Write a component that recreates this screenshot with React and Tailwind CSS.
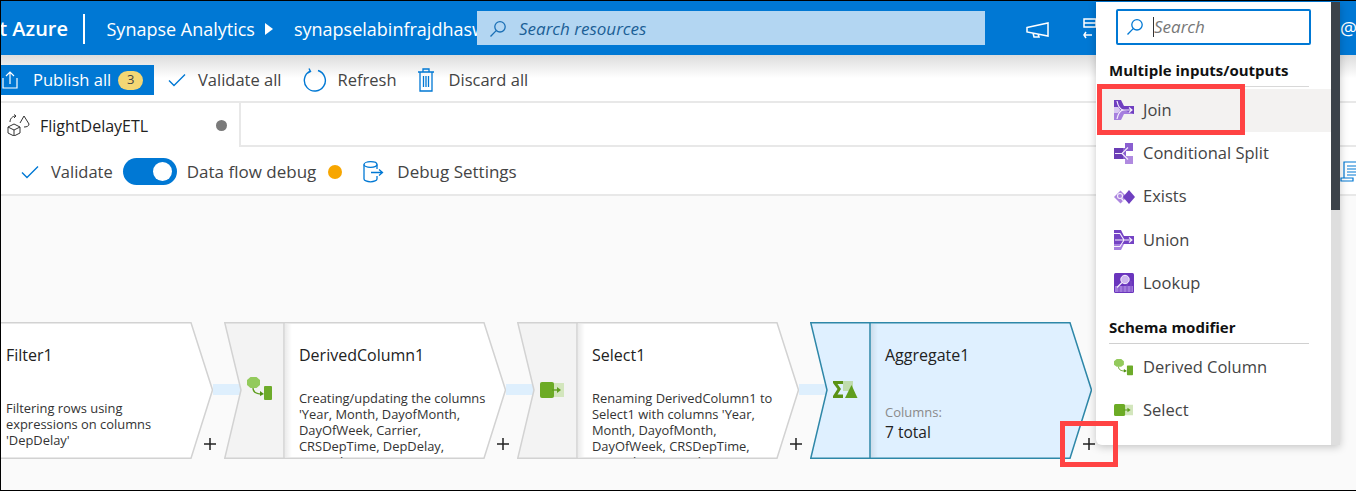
import React from "react";

const Check = ({ className }) => (
  <svg width="18" height="14" viewBox="0 0 18 14" fill="none" stroke="#0078d4" strokeWidth="1.4" className={className}>
    <path d="M1 7.5 L6 12.5 L17 1.5" />
  </svg>
);

const SearchGlass = ({ color = "#0078d4" }) => (
  <svg width="18" height="18" viewBox="0 0 18 18" fill="none" stroke={color} strokeWidth="1.3" className="flex-none">
    <circle cx="11" cy="6.8" r="5.2" />
    <path d="M7.2 10.6 L1.5 16.5" />
  </svg>
);

// purple transform icons from the menu
const JoinIcon = () => (
  <svg width="20" height="20" viewBox="0 0 20 20" className="flex-none">
    <path d="M0 0h7l3 6h10v8H0v-1h4l2-3-2-3H0z" fill="#6f3fc0" />
    <path d="M0 13h4l2-3h4l10 4h-10l-3 6H0z" fill="#a57ede" />
    <path d="M0 7h4l2 3-2 3H0z" fill="#d9c8f2" />
    <path d="M3 1c1 5 3 9 7 9h8M3 19c1-5 3-9 7-9M15 7.500 18 10l-3 2.500" fill="none" stroke="#f5effc" strokeWidth="1.200" />
  </svg>
);

const SplitIcon = () => (
  <svg width="20" height="21" viewBox="0 0 20 21" className="flex-none">
    <path d="M0 5h9v11H0z" fill="#6a3db5" />
    <path d="M11 0h8v8h-8z" fill="#8a5fd0" />
    <path d="M11 13h8v8h-8z" fill="#b08ae0" />
    <path d="M9 5h3v11H9z" fill="#8a5fd0" />
    <path d="M1 10.500h7l6-6M8 10.500l6 6" fill="none" stroke="#f1e9fb" strokeWidth="1.200" />
  </svg>
);

const ExistsIcon = () => (
  <svg width="21" height="16" viewBox="0 0 21 16" className="flex-none">
    <path d="M0 8l6.500-6.500L13 8l-6.500 6.500z" fill="#ac86df" />
    <path d="M9 8l6-7 6 7-6 7z" fill="#6f3fc0" />
    <circle cx="6" cy="7" r="2.500" fill="#ac86df" stroke="#f5effc" strokeWidth="1.100" />
    <path d="M7.500 9.500 10 12.500" stroke="#f5effc" strokeWidth="1.300" />
  </svg>
);

const UnionIcon = () => (
  <svg width="20" height="20" viewBox="0 0 20 20" className="flex-none">
    <path d="M0 0h7l3 6h10v8H0z" fill="#7443c4" />
    <path d="M0 14h10l-3 6H0z" fill="#a57ede" />
    <path d="M0 3.500h6l4 6.500H1M0 16.500h6l4-6.500h8M15 7.500 18 10l-3 2.500" fill="none" stroke="#f5effc" strokeWidth="1.100" />
  </svg>
);

const LookupIcon = () => (
  <svg width="20" height="20" viewBox="0 0 20 20" className="flex-none">
    <rect width="20" height="20" rx="1.500" fill="#6a35bd" />
    <path d="M1 13h18v6H1z" fill="#a27bdc" />
    <path d="M5 13v6M9 13v6M13 10v9M17 8v11" stroke="#7d4fc4" strokeWidth="1" />
    <circle cx="11" cy="6.500" r="4.200" fill="#cdb6ee" stroke="#f5effc" strokeWidth="1" />
    <path d="M8 9.500 3 14.500" stroke="#f5effc" strokeWidth="1.300" />
  </svg>
);

const DerivedIcon = ({ width = 25, height = 24, className }) => (
  <svg width={width} height={height} viewBox="0 0 25 24" preserveAspectRatio="none" className={className}>
    <path d="M3.500 0h6l3.500 3v5l-3.500 3h-6L0 8V3z" fill="#93ca5c" />
    <path d="M6 11c0 4 3 6 9 6" fill="none" stroke="#5f9e1f" strokeWidth="1.300" />
    <path d="M13 14l4 3-4 2z" fill="#4f8f14" />
    <rect x="17" y="9" width="8" height="14" rx="1" fill="#6dab2a" />
  </svg>
);

const SelectIcon = ({ width = 24, height = 16, className }) => (
  <svg width={width} height={height} viewBox="0 0 24 16" preserveAspectRatio="none" className={className}>
    <rect x="12" y="1" width="12" height="14" fill="#d3e6bd" />
    <rect y="0" width="14" height="16" rx="2" fill="#6cab25" />
    <path d="M12 8h7" stroke="#5f9e1f" strokeWidth="1.400" />
    <path d="M17 5l4 3-4 3z" fill="#5f9e1f" />
  </svg>
);

const AggregateIcon = ({ className }) => (
  <svg width="25" height="17" viewBox="0 0 25 17" className={className}>
    <rect x="10" y="0" width="10" height="10" fill="#bfdcae" />
    <path d="M0 0h10v3H4.500l3.500 5-3.500 5.500H10V17H0v-2l4.500-7L0 2z" fill="#5a9216" />
    <path d="M18.500 4l6 13H12z" fill="#5f9e1f" />
  </svg>
);

const Plus = ({ className }) => (
  <svg width="12" height="12" viewBox="0 0 12 12" stroke="#222" strokeWidth="1.5" className={className}>
    <path d="M6 0v12M0 6h12" />
  </svg>
);

const FlowNode = ({ title, icon, lines, selected, bar, textTop, children }) => {
  const stroke = selected ? "#2e87a8" : "#d2d2d2";
  const bodyFill = selected ? "#dff0ff" : "#ffffff";
  const panelFill = selected ? "#dff0ff" : "#f3f3f3";
  return (
    <div className="relative w-[282px] h-[137px] flex-none">
      {bar && <div className="absolute left-[-11px] top-[62px] w-[30px] h-[11px] bg-[#deeffd]" />}
      <svg width="282" height="137" viewBox="0 0 282 137" className="absolute left-0 top-0">
        <path d="M60 .75H260L281.500 68 260 136.250H60z" fill={bodyFill} />
        <path d="M.75 .75H60V136.250H.75L17 68z" fill={panelFill} />
        <path d="M60 .75H260L281.500 68 260 136.250H.75L17 68 .75 .75zM60 .75V136.250" fill="none" stroke={stroke} strokeWidth="1.500" />
      </svg>
      <div className="absolute left-[61px] top-[2px] w-[7px] h-[133px] bg-gradient-to-r from-[#00000014] to-transparent" />
      <div className="relative flex h-[136px]">
        <div className="w-[60px] flex-none flex justify-center items-start">{icon}</div>
        <div className="w-[212px] pl-[15px] overflow-hidden text-[#333]">
          <div className="mt-[22px] text-[16px] leading-[22px] text-[#222] whitespace-nowrap">{title}</div>
          {lines ? (
            <div className={`text-[12.900px] leading-[16px] whitespace-nowrap ${textTop}`}>
              {lines.map((l) => (
                <div key={l}>{l}</div>
              ))}
            </div>
          ) : (
            children
          )}
        </div>
      </div>
      <Plus className="absolute left-[273px] top-[116px]" />
    </div>
  );
};

const MenuItem = ({ icon, label, active }) => (
  <div className={`h-[43.300px] flex items-center ${active ? "bg-[#f3f2f1]" : ""}`}>
    <div className="w-[46px] pl-[17px] flex-none flex">{icon}</div>
    <span className="text-[16.500px] text-[#444]">{label}</span>
  </div>
);

const AddMenu = () => (
  <div className="absolute left-[1095px] top-[1px] w-[244px] h-[443px] bg-white rounded-bl-[6px] shadow-[0_2px_8px_rgba(0,0,0,0.22)] flex">
    <div className="w-[235px] flex-none">
      <div className="mt-[7px] ml-[20px] w-[195px] h-[36px] border-2 border-[#0078d4] rounded-[2px] flex items-center pl-[8px]">
        <SearchGlass />
        <span className="ml-[9px] w-px h-[20px] bg-[#333]" />
        <span className="italic text-[17px] text-[#777]">Search</span>
      </div>
      <div className="mt-[15px] ml-[13px] w-[200px] pb-[6px] border-b border-[#d8d8d8] text-[15px] leading-[20px] font-bold text-[#111] whitespace-nowrap">
        Multiple inputs/outputs
      </div>
      <div className="ml-[1px] mt-[1.500px]">
        <MenuItem active icon={<JoinIcon />} label="Join" />
        <MenuItem icon={<SplitIcon />} label="Conditional Split" />
        <MenuItem icon={<ExistsIcon />} label="Exists" />
        <MenuItem icon={<UnionIcon />} label="Union" />
        <MenuItem icon={<LookupIcon />} label="Lookup" />
      </div>
      <div className="mt-[12px] ml-[13px] w-[200px] pb-[6px] border-b border-[#d0d0d0] text-[15px] leading-[20px] font-bold text-[#111]">
        Schema modifier
      </div>
      <div className="ml-[1px] mt-[1.500px]">
        <MenuItem icon={<DerivedIcon width={19} height={17} />} label="Derived Column" />
        <MenuItem icon={<SelectIcon width={19} height={12} />} label="Select" />
      </div>
    </div>
    <div className="w-[9px] flex-none bg-[#dedede]">
      <div className="h-[208px] bg-[#3b424a]" />
    </div>
  </div>
);

export default function App() {
  return (
    <div className="relative w-[1356px] h-[491px] overflow-hidden box-border border-t border-b border-l border-black bg-[#fafafa] font-['Open_Sans',sans-serif]">
      {/* top bar */}
      <div className="h-[54px] bg-[#0078d4] flex items-start text-white">
        <div className="w-[476px] h-[54px] pt-[2px] flex-none flex items-center overflow-hidden whitespace-nowrap text-[18px]">
          <span className="-ml-[9px] font-semibold text-[20px]">ft Azure</span>
          <span className="ml-[15px] w-[1.500px] h-[30px] bg-white flex-none" />
          <span className="ml-[22px]">Synapse Analytics</span>
          <svg width="8" height="12" viewBox="0 0 8 12" className="ml-[10px] flex-none">
            <path d="M0 0l8 6-8 6z" fill="#fff" />
          </svg>
          <span className="ml-[21px]">synapselabinfrajdhasworkspace</span>
        </div>
        <div className="mt-[10px] w-[508px] h-[34px] pl-[12px] pt-[1px] flex-none bg-[#b3d6f2] flex items-center">
          <SearchGlass color="#1a6fb5" />
          <span className="ml-[12px] italic text-[17px] text-[#1b5f96]">Search resources</span>
        </div>
        <svg width="24" height="16" viewBox="0 0 24 16" fill="none" stroke="#fff" strokeWidth="1.500" className="ml-[41px] mt-[21px] flex-none">
          <path d="M1 5.500 22 1v13L1 10zM7 11l1 4h5l-1-3" />
        </svg>
        <svg width="16" height="22" viewBox="0 0 16 22" fill="none" stroke="#fff" strokeWidth="1.500" className="ml-[33px] mt-[17px] flex-none">
          <path d="M1 1h12v8H1zM1 5h12M3 20l-2-3 2-3M1 17h8" />
        </svg>
        <span className="ml-[241px] mt-[13px] text-[19px]">@</span>
      </div>

      {/* command bar */}
      <div className="h-[48px] pt-[4px] bg-gradient-to-b from-[#dcdcdc] via-white to-white border-b-2 border-[#e8e8e8] flex items-center text-[16.500px] text-[#444] whitespace-nowrap">
        <div className="w-[153px] h-[30px] flex-none bg-[#0078d4] flex items-center text-white">
          <svg width="16" height="18" viewBox="0 0 16 18" fill="none" stroke="#fff" strokeWidth="1.200" className="ml-[1px] flex-none">
            <path d="M1 7v10h14V7M8 13V1M4 5l4-4 4 4" />
          </svg>
          <span className="ml-[15px]">Publish all</span>
          <span className="ml-[7px] w-[25px] h-[19px] rounded-full bg-[#f4d774] text-[#444] text-[13px] flex items-center justify-center">3</span>
        </div>
        <Check className="ml-[14px] flex-none" />
        <span className="ml-[12px]">Validate all</span>
        <svg width="24" height="24" viewBox="0 0 24 24" fill="none" stroke="#0078d4" strokeWidth="1.400" className="ml-[21px] flex-none">
          <path d="M15 2.500A10.500 10.500 0 1 1 7 3.200M6 .5l1.500 3L4.500 5" />
        </svg>
        <span className="ml-[11px]">Refresh</span>
        <svg width="18" height="24" viewBox="0 0 18 24" fill="none" stroke="#0078d4" strokeWidth="1.300" className="ml-[20px] flex-none">
          <path d="M1 4h16M6 4V1h6v3M3 4v19h12V4M6.500 8v11M9 8v11M11.500 8v11" />
        </svg>
        <span className="ml-[14px]">Discard all</span>
      </div>

      {/* tab row */}
      <div className="h-[44px] bg-white flex text-[#222]">
        <div className="w-[240px] pt-[2px] flex-none flex items-center border-r-2 border-[#e8e8e8]">
          <svg width="24" height="22" viewBox="0 0 24 22" fill="none" stroke="#333" strokeWidth="1" className="ml-[6px] -mt-[2px] flex-none">
            <path d="M7 10l6 3v6l-6 3-6-3v-6zM1 13l6 3 6-3M7 16v6M17 2l5 8c0 2-2 3-5 3M3 8c0-3 2-6 6-6M9 2 7 .5M9 2 7 4" />
            <path d="M17 2l-4 7" />
          </svg>
          <span className="ml-[9px] text-[16px]">FlightDelayETL</span>
          <span className="ml-[68px] w-[11px] h-[11px] -mt-[2px] rounded-full bg-[#7a7a7a] flex-none" />
        </div>
        <div className="flex-1 border-b-2 border-[#e8e8e8]" />
      </div>

      {/* data flow toolbar */}
      <div className="h-[49px] pt-[2px] bg-white border-b-2 border-[#e8e8e8] flex items-center text-[17px] text-[#444] whitespace-nowrap">
        <Check className="ml-[20px] flex-none" />
        <span className="ml-[12px] mt-[1px] text-[16.500px]">Validate</span>
        <div className="ml-[10px] w-[54px] h-[27px] flex-none rounded-full bg-[#0078d4] flex items-center justify-end pr-[5px]">
          <span className="w-[19px] h-[19px] rounded-full bg-white" />
        </div>
        <span className="ml-[10px]">Data flow debug</span>
        <span className="ml-[12px] w-[14px] h-[14px] rounded-full bg-[#f7a600] flex-none" />
        <svg width="21" height="22" viewBox="0 0 21 22" fill="none" stroke="#0078d4" strokeWidth="1.300" className="ml-[21px] flex-none">
          <ellipse cx="7.500" cy="3.500" rx="6.500" ry="2.800" />
          <path d="M1 3.500V18c0 1.500 3 2.800 6.500 2.800S14 19.500 14 18v-3M14 3.500V8M8 11.500h11M16 8.500l3.500 3-3.500 3" />
        </svg>
        <span className="ml-[13px]">Debug Settings</span>
        <svg width="16" height="22" viewBox="0 0 16 22" fill="none" stroke="#0078d4" strokeWidth="1.200" className="ml-[823px] flex-none">
          <path d="M4 17V1h14M7 5h9M7 8h9M7 11h9M7 14h9M1 17h12v3H1z" />
        </svg>
      </div>

      {/* canvas */}
      <div className="flex gap-[11px] -ml-[70px] pt-[126px]">
        <FlowNode title="Filter1" lines={["Filtering rows using", "expressions on columns", "'DepDelay'"]} textTop="mt-[34px]" />
        <FlowNode
          bar
          title="DerivedColumn1"
          icon={<DerivedIcon className="mt-[55px] ml-[11px]" />}
          lines={["Creating/updating the columns", "'Year, Month, DayofMonth,", "DayOfWeek, Carrier,", "CRSDepTime, DepDelay,", "DepDel15, CRSArrTime"]}
          textTop="mt-[24px]"
        />
        <FlowNode
          bar
          title="Select1"
          icon={<SelectIcon className="mt-[60px] ml-[10px]" />}
          lines={["Renaming DerivedColumn1 to", "Select1 with columns 'Year,", "Month, DayofMonth,", "DayOfWeek, CRSDepTime,", "DepDelay, DepDel15"]}
          textTop="mt-[24px]"
        />
        <FlowNode bar selected title="Aggregate1" icon={<AggregateIcon className="mt-[59px] ml-[10px]" />}>
          <div className="mt-[37px] text-[13px] leading-[18px] text-[#8a8a8a]">Columns:</div>
          <div className="text-[15.500px] leading-[22px] font-medium text-[#222]">7 total</div>
        </FlowNode>
      </div>

      <AddMenu />

      {/* red callouts over the screenshot */}
      <div className="absolute left-[1096px] top-[83px] w-[148px] h-[51px] border-[5px] border-[#ff4343]" />
      <div className="absolute left-[1059px] top-[420px] w-[58px] h-[46px] border-[5px] border-[#ff4343]" />
    </div>
  );
}
